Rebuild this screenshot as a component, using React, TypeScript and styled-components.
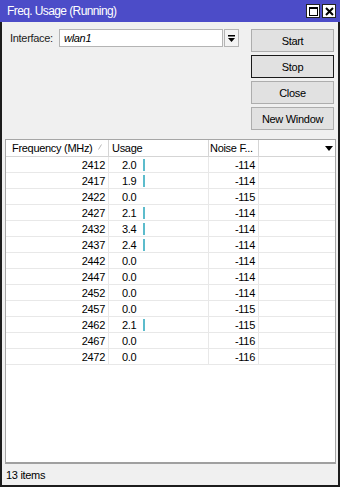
import React from 'react';
import styled, { createGlobalStyle } from 'styled-components';

const GlobalStyle = createGlobalStyle`
  html, body {
    margin: 0;
    padding: 0;
    background: #f0f0f0;
  }
  * {
    box-sizing: border-box;
  }
`;

const rows: [number, string, number][] = [
  [2412, '2.0', -114],
  [2417, '1.9', -114],
  [2422, '0.0', -115],
  [2427, '2.1', -114],
  [2432, '3.4', -114],
  [2437, '2.4', -114],
  [2442, '0.0', -114],
  [2447, '0.0', -114],
  [2452, '0.0', -114],
  [2457, '0.0', -115],
  [2462, '2.1', -115],
  [2467, '0.0', -116],
  [2472, '0.0', -116],
];

const App = () => {
  return (
    <>
      <GlobalStyle />
      <Window>
        <TitleBar>
          <Title>Freq. Usage (Running)</Title>
          <TitleButtons>
            <TitleButton>
              <svg width="9" height="9" viewBox="0 0 9 9">
                <rect x="0.5" y="0.5" width="8" height="8" fill="none" stroke="#000" />
                <rect x="0" y="0" width="9" height="2" fill="#000" />
              </svg>
            </TitleButton>
            <TitleButton>
              <svg width="9" height="9" viewBox="0 0 9 9">
                <path d="M1 1 L8 8 M8 1 L1 8" stroke="#000" strokeWidth="2" />
              </svg>
            </TitleButton>
          </TitleButtons>
        </TitleBar>
        <Body>
          <Top>
            <FormRow>
              <Label>Interface:</Label>
              <Input>wlan1</Input>
              <DropButton>
                <svg width="7" height="7" viewBox="0 0 7 7">
                  <rect x="0" y="0" width="7" height="1.5" fill="#000" />
                  <path d="M0 3 L7 3 L3.5 7 Z" fill="#000" />
                </svg>
              </DropButton>
            </FormRow>
            <Buttons>
              <Button>Start</Button>
              <Button $focused>Stop</Button>
              <Button>Close</Button>
              <Button>New Window</Button>
            </Buttons>
          </Top>
          <List>
            <HeaderRow>
              <HeadCell $pad={6}>
                Frequency (MHz)
                <SortMark width="4" height="6" viewBox="0 0 4 6">
                  <path d="M0.5 5.5 L3.5 0.5" stroke="#b8b8b8" strokeWidth="1" />
                </SortMark>
              </HeadCell>
              <HeadCell $pad={3}>Usage</HeadCell>
              <HeadCell $pad={1}>Noise F...</HeadCell>
              <HeadCell $pad={0} $last>
                <svg width="8" height="5" viewBox="0 0 8 5">
                  <path d="M0 0 L8 0 L4 5 Z" fill="#000" />
                </svg>
              </HeadCell>
            </HeaderRow>
            {rows.map(([freq, usage, noise]) => (
              <Row key={freq}>
                <Cell $align="right">{freq}</Cell>
                <UsageCell>
                  <UsageValue>{usage}</UsageValue>
                  {usage !== '0.0' && <UsageBar />}
                </UsageCell>
                <Cell $align="right">{noise}</Cell>
                <Cell $align="left" />
              </Row>
            ))}
          </List>
          <Status>13 items</Status>
        </Body>
      </Window>
    </>
  );
};

const Window = styled.div`
  width: 340px;
  height: 487px;
  display: flex;
  flex-direction: column;
  background: #f0f0f0;
  font-family: "Liberation Sans", Arial, sans-serif;
  font-size: 11px;
  letter-spacing: -0.3px;
  color: #000;
`;

const TitleBar = styled.div`
  height: 22px;
  flex: none;
  display: flex;
  align-items: center;
  justify-content: space-between;
  background: #4c4cc8;
  padding: 0 4px 0 7px;
`;

const Title = styled.span`
  color: #fff;
  font-size: 12px;
  letter-spacing: -0.6px;
`;

const TitleButtons = styled.div`
  display: flex;
  gap: 2px;
`;

const TitleButton = styled.div`
  width: 14px;
  height: 14px;
  background: #fff;
  border: 1px solid #222;
  display: flex;
  align-items: center;
  justify-content: center;
`;

const Body = styled.div`
  flex: 1;
  display: flex;
  flex-direction: column;
  border-left: 2px solid #1c1c1c;
  border-right: 2px solid #1c1c1c;
  border-bottom: 2px solid #1c1c1c;
`;

const Top = styled.div`
  height: 117px;
  flex: none;
  display: flex;
  justify-content: space-between;
  padding: 7px 4px 0 8px;
`;

const FormRow = styled.div`
  display: flex;
  align-items: center;
  height: 18px;
`;

const Label = styled.span`
  width: 49px;
  color: #222;
`;

const Input = styled.div`
  width: 164px;
  height: 18px;
  background: #fff;
  border: 1px solid #b4b4b4;
  font-style: italic;
  padding: 1px 0 0 4px;
  line-height: 15px;
`;

const DropButton = styled.div`
  width: 15px;
  height: 18px;
  margin-left: 1px;
  background: #f3f3f3;
  border: 1px solid #b4b4b4;
  display: flex;
  align-items: center;
  justify-content: center;
`;

const Buttons = styled.div`
  display: flex;
  flex-direction: column;
  gap: 3px;
  width: 83px;
`;

const Button = styled.div<{ $focused?: boolean }>`
  height: 23px;
  display: flex;
  align-items: center;
  justify-content: center;
  background: #e1e1e1;
  border: 1px solid ${(p) => (p.$focused ? '#1a1a1a' : '#adadad')};
`;

const List = styled.div`
  flex: 1;
  margin: 0 2px 0 3px;
  background: #fff;
  border: 1px solid #a6a6a6;
  border-bottom: 2px solid #a0a0a0;
`;

const gridCols = '103px 100px 50px 1fr';

const HeaderRow = styled.div`
  display: grid;
  grid-template-columns: ${gridCols};
  height: 17px;
  border-bottom: 1px solid #d5d5d5;
`;

const HeadCell = styled.div<{ $pad: number; $last?: boolean }>`
  display: flex;
  align-items: center;
  justify-content: ${(p) => (p.$last ? 'flex-end' : 'flex-start')};
  padding-left: ${(p) => p.$pad}px;
  padding-right: ${(p) => (p.$last ? 2 : 0)}px;
  border-right: ${(p) => (p.$last ? 'none' : '1px solid #d5d5d5')};
  white-space: nowrap;
  overflow: hidden;
`;

const SortMark = styled.svg`
  margin-left: 6px;
  margin-top: -3px;
  flex: none;
`;

const Row = styled.div`
  display: grid;
  grid-template-columns: ${gridCols};
  height: 16px;
  border-bottom: 1px solid #e8e8e8;
`;

const Cell = styled.div<{ $align: 'left' | 'right' }>`
  display: flex;
  align-items: center;
  justify-content: ${(p) => (p.$align === 'right' ? 'flex-end' : 'flex-start')};
  padding-right: 3px;
  border-right: 1px solid #e8e8e8;
  &:last-child {
    border-right: none;
  }
`;

const UsageCell = styled.div`
  display: flex;
  align-items: center;
  padding-left: 13px;
  border-right: 1px solid #e8e8e8;
`;

const UsageValue = styled.span`
  width: 21px;
`;

const UsageBar = styled.span`
  width: 2px;
  height: 12px;
  background: #5cbccc;
`;

const Status = styled.div`
  height: 21px;
  flex: none;
  display: flex;
  align-items: center;
  padding-left: 4px;
`;

export default App;
